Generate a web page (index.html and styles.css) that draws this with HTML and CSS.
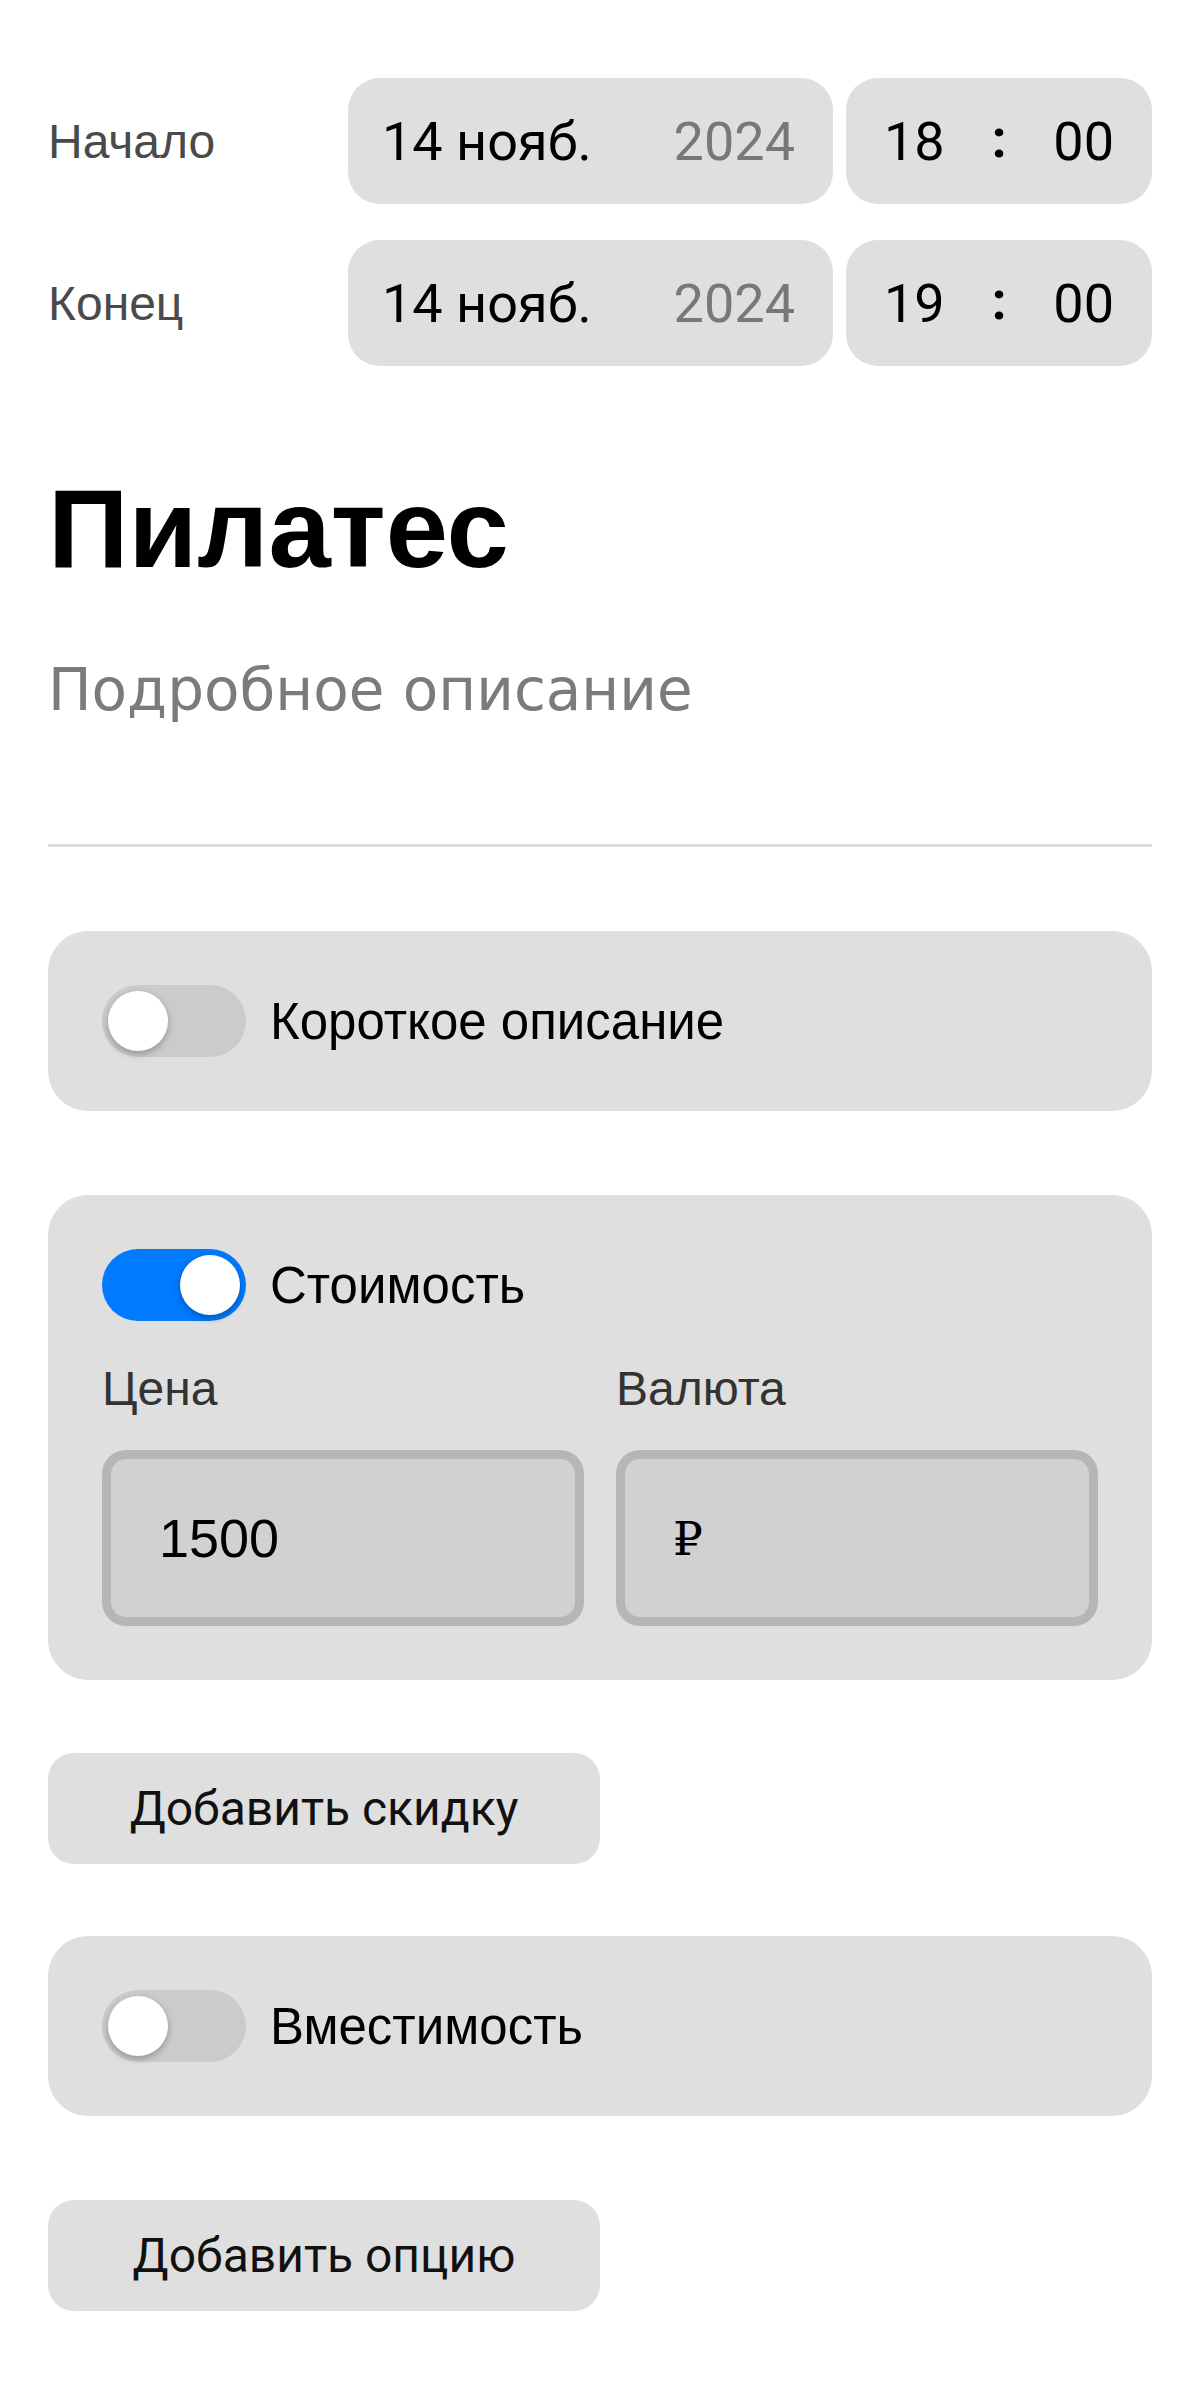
FILE: index.html
```html
<!DOCTYPE html>
<html lang="ru">
<head>
<meta charset="utf-8">
<title>Пилатес</title>
<link rel="stylesheet" href="styles.css">
</head>
<body>
<main class="page">
  <section class="schedule">
    <div class="dt-row">
      <div class="dt-label">Начало</div>
      <div class="dt-date"><span class="d-day">14 нояб.</span><span class="d-year">2024</span></div>
      <div class="dt-time"><span>18</span><span class="colon">:</span><span>00</span></div>
    </div>
    <div class="dt-row">
      <div class="dt-label">Конец</div>
      <div class="dt-date"><span class="d-day">14 нояб.</span><span class="d-year">2024</span></div>
      <div class="dt-time"><span>19</span><span class="colon">:</span><span>00</span></div>
    </div>
  </section>

  <h1 class="title">Пилатес</h1>
  <div class="desc">Подробное описание</div>

  <section class="card card-first">
    <div class="toggle-row">
      <span class="toggle"><span class="knob"></span></span>
      <span class="toggle-text">Короткое описание</span>
    </div>
  </section>

  <section class="card card-price">
    <div class="toggle-row">
      <span class="toggle on"><span class="knob"></span></span>
      <span class="toggle-text">Стоимость</span>
    </div>
    <div class="fields">
      <div class="field">
        <div class="field-label">Цена</div>
        <div class="field-input">1500</div>
      </div>
      <div class="field">
        <div class="field-label">Валюта</div>
        <div class="field-input"><span class="rub">₽</span></div>
      </div>
    </div>
  </section>

  <button class="btn btn-discount" type="button">Добавить скидку</button>

  <section class="card card-capacity">
    <div class="toggle-row">
      <span class="toggle"><span class="knob"></span></span>
      <span class="toggle-text">Вместимость</span>
    </div>
  </section>

  <button class="btn btn-option" type="button">Добавить опцию</button>
</main>
</body>
</html>
```

FILE: styles.css
```css
html, body {
  margin: 0;
  padding: 0;
  background: #ffffff;
}

body {
  font-family: "Liberation Sans", Arial, sans-serif;
  color: #000;
}

.page {
  padding: 78px 48px 60px;
  display: flex;
  flex-direction: column;
  align-items: flex-start;
}

.schedule {
  width: 100%;
  display: flex;
  flex-direction: column;
  gap: 36px;
}

.dt-row {
  display: grid;
  grid-template-columns: 287px 1fr 306px;
  column-gap: 13px;
  align-items: center;
}

.dt-label {
  font-size: 48px;
  color: #4a4a4a;
}

.dt-date,
.dt-time {
  height: 126px;
  box-sizing: border-box;
  background: #dfdfdf;
  border-radius: 32px;
  display: flex;
  align-items: center;
  justify-content: space-between;
  font-family: Roboto, "Noto Sans", sans-serif;
  font-size: 54px;
  color: #000;
}

.dt-date {
  padding: 0 38px 0 34px;
}

.d-year {
  color: #787878;
}

.dt-time {
  padding: 0 38px;
}

.colon {
  font-weight: 700;
  position: relative;
  top: -3px;
}

.title {
  margin: 107px 0 0;
  font-size: 112px;
  line-height: 1;
  font-weight: 700;
  color: #000;
}

.desc {
  margin-top: 76px;
  width: 100%;
  height: 183px;
  font-family: "DejaVu Sans", sans-serif;
  font-size: 58px;
  line-height: 1;
  color: #7b7b7b;
  border-bottom: 3px solid #dddddd;
}

.card {
  margin-top: 84px;
  width: 100%;
  box-sizing: border-box;
  padding: 54px;
  background: #dfdfdf;
  border-radius: 40px;
}

.card-capacity {
  margin-top: 72px;
}

.toggle-row {
  display: flex;
  align-items: center;
  gap: 24px;
}

.toggle {
  position: relative;
  width: 144px;
  height: 72px;
  border-radius: 36px;
  background: #cbcbcb;
  flex: none;
}

.toggle.on {
  background: #007aff;
}

.knob {
  position: absolute;
  top: 6px;
  left: 6px;
  width: 60px;
  height: 60px;
  border-radius: 50%;
  background: #ffffff;
  box-shadow: 0 3px 7px rgba(0, 0, 0, 0.28);
}

.toggle.on .knob {
  left: auto;
  right: 6px;
}

.toggle-text {
  font-size: 51px;
  color: #000;
}

.fields {
  margin-top: 44px;
  display: grid;
  grid-template-columns: 1fr 1fr;
  column-gap: 32px;
}

.field-label {
  font-size: 48px;
  line-height: 1;
  color: #333333;
}

.field-input {
  margin-top: 37px;
  height: 176px;
  box-sizing: border-box;
  border: 9px solid #b6b6b6;
  border-radius: 24px;
  background: #d1d1d1;
  padding: 0 48px;
  display: flex;
  align-items: center;
  font-size: 54px;
  color: #000;
}

.rub {
  font-family: "DejaVu Serif", "Liberation Serif", serif;
  font-size: 47px;
}

.btn {
  margin-top: 73px;
  width: 552px;
  height: 111px;
  border: none;
  border-radius: 26px;
  background: #dfdfdf;
  font-family: Roboto, "Liberation Sans", sans-serif;
  font-size: 48px;
  color: #111;
  padding: 0;
  cursor: pointer;
}

.btn-option {
  margin-top: 84px;
}
```
